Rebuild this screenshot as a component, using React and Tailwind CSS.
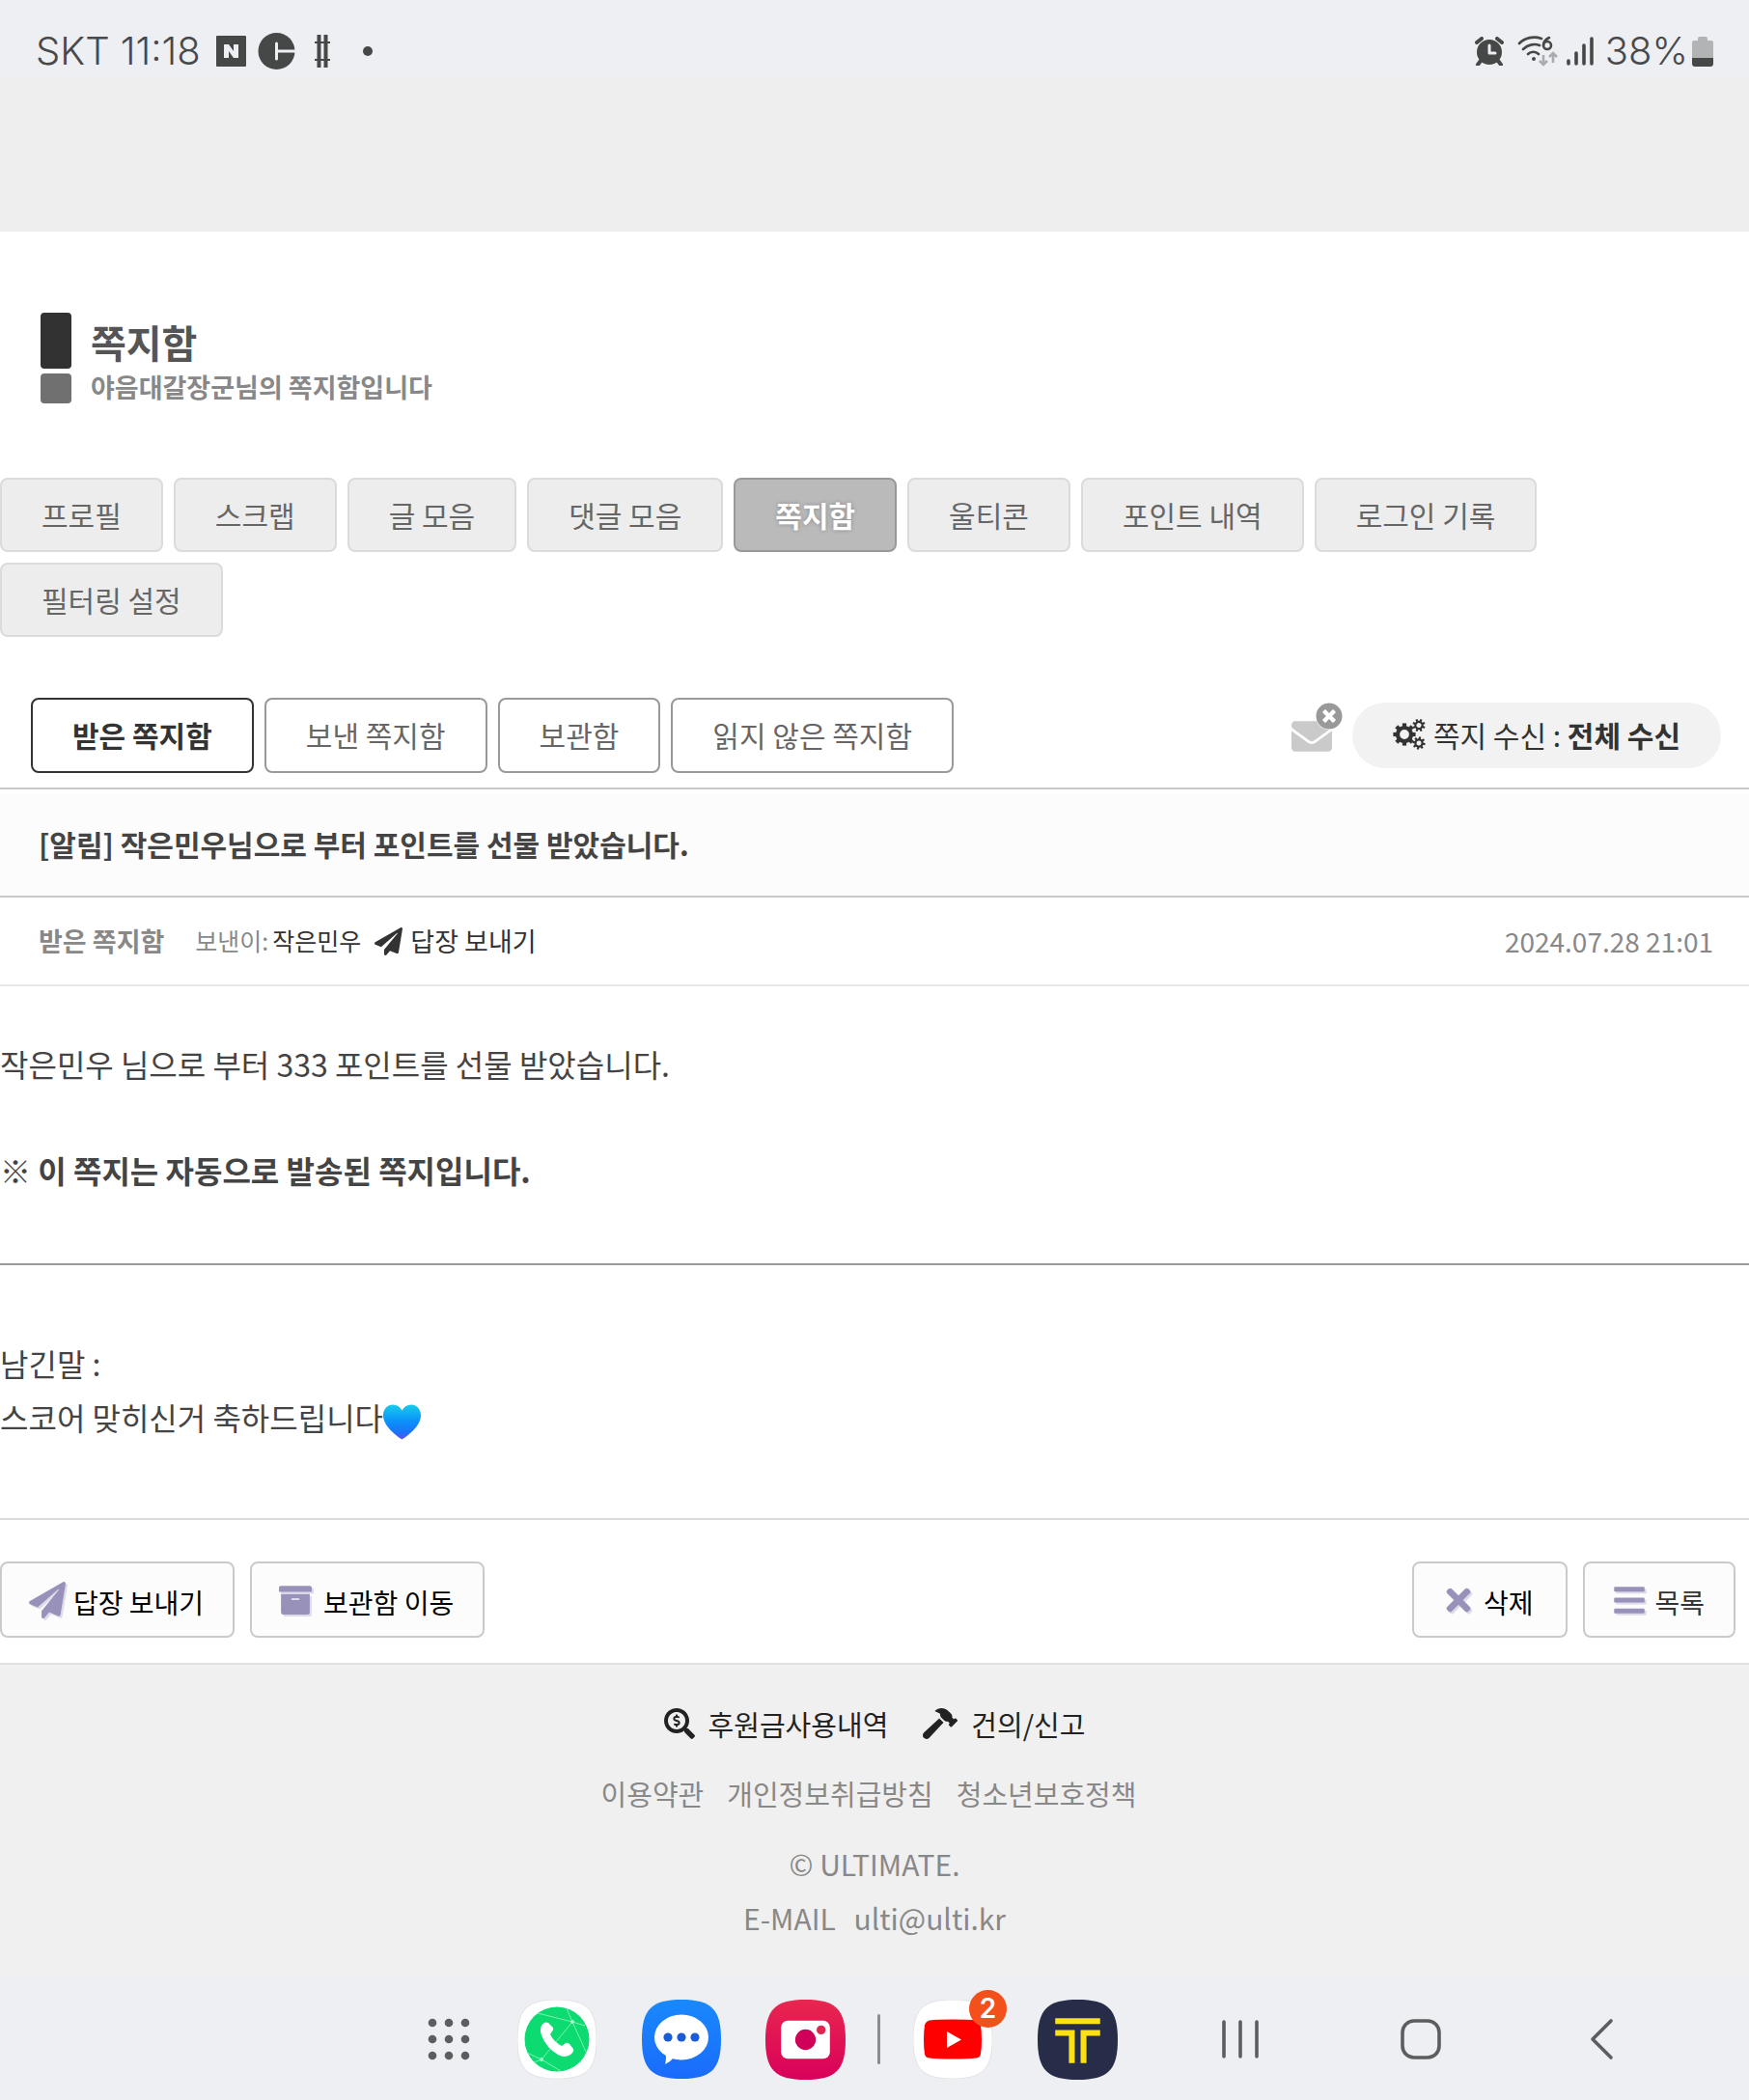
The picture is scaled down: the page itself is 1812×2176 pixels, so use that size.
import {
  FaArchive,
  FaBars,
  FaEnvelope,
  FaHammer,
  FaPaperPlane,
  FaSearchDollar,
  FaTimes,
  FaTimesCircle,
} from "react-icons/fa";

const profileTabs = [
  "프로필",
  "스크랩",
  "글 모음",
  "댓글 모음",
  "쪽지함",
  "울티콘",
  "포인트 내역",
  "로그인 기록",
  "필터링 설정",
];

const boxTabs = ["받은 쪽지함", "보낸 쪽지함", "보관함", "읽지 않은 쪽지함"];

const policies = ["이용약관", "개인정보취급방침", "청소년보호정책"];

// Rounded app tile, 82x82
const TILE = "M41 0C72 0 82 10 82 41S72 82 41 82 0 72 0 41 10 0 41 0Z";

const Gear = ({ cx, cy, r, width, tooth, turn = 0 }) => (
  <g transform={`rotate(${turn} ${cx} ${cy})`} stroke="currentColor" fill="none">
    <circle cx={cx} cy={cy} r={r} strokeWidth={width} />
    {[0, 45, 90, 135, 180, 225, 270, 315].map((deg) => (
      <path
        key={deg}
        d={`M${cx} ${cy - r}v${-tooth}`}
        strokeWidth={width}
        transform={`rotate(${deg} ${cx} ${cy})`}
      />
    ))}
  </g>
);

const Gears = () => (
  <svg className="mr-2" width="34" height="32" viewBox="0 0 34 32">
    <Gear cx={12} cy={16} r={7} width={4.2} tooth={4.6} />
    <Gear cx={27} cy={6.5} r={3.6} width={2.2} tooth={3} turn={22} />
    <Gear cx={27} cy={25} r={3.6} width={2.2} tooth={3} turn={10} />
  </svg>
);

const StatusBar = () => (
  <header className="h-20 bg-[#eeeff3] px-[37px] pt-[26px] flex justify-between items-start text-[#48494b] font-['Inter',sans-serif] font-light text-[40px] leading-[54px]">
    <div className="flex items-center">
      <span>SKT 11:18</span>
      <svg className="ml-4" width="31" height="32" viewBox="0 0 31 32">
        <rect width="31" height="32" rx="1" fill="#464847" />
        <path d="M8 23V9h5l5 7V9h5v14h-5l-5-7v7z" fill="#eeeff3" />
      </svg>
      <svg className="ml-3" width="39" height="38" viewBox="0 0 39 38">
        <circle cx="19.500" cy="19" r="19" fill="#464847" />
        <path
          d="M19.500 11v16M19.500 19H39"
          stroke="#eeeff3"
          strokeWidth="3"
          strokeLinecap="round"
        />
      </svg>
      <svg className="ml-5" width="16" height="34" viewBox="0 0 16 34">
        <path
          d="M4.500 0v34M11.500 0v34"
          stroke="#464847"
          strokeWidth="4"
        />
        <path d="M0 8h16M0 26h16" stroke="#464847" strokeWidth="2" />
      </svg>
      <span className="ml-[34px] size-[10px] rounded-full bg-[#464847]" />
    </div>

    <div className="flex items-center">
      <svg width="30" height="30" viewBox="0 0 30 30">
        <circle cx="15" cy="16" r="13" fill="#464847" />
        <path
          d="M2 6l5-4M28 6l-5-4M6 25l-3 4M24 25l3 4"
          stroke="#464847"
          strokeWidth="4"
          strokeLinecap="round"
        />
        <path
          d="M15 9v8h6"
          stroke="#eeeff3"
          strokeWidth="3"
          fill="none"
          strokeLinecap="round"
          strokeLinejoin="round"
        />
      </svg>
      <svg className="ml-[14px]" width="42" height="32" viewBox="0 0 42 32">
        <g
          stroke="#464847"
          strokeWidth="2.600"
          fill="none"
          strokeLinecap="round"
        >
          <path d="M2 8C8 2 17 0 25 3M6 14c5-5 12-6 17-4M11 19c3-3 8-3 11 0" />
          <path d="M33 2c-4 2-6 5-6 8" />
          <circle cx="31" cy="10" r="4" />
        </g>
        <circle cx="17" cy="24" r="2" fill="#464847" />
        <path
          d="M27 20v9m-4-3l4 4 4-4M37 28v-9m-4 3l4-4 4 4"
          stroke="#a9abae"
          strokeWidth="2.600"
          fill="none"
        />
      </svg>
      <svg className="ml-[9px]" width="28" height="30" viewBox="0 0 28 30">
        <path
          d="M2 25v3M10 17v11M18 9v19M26 2v26"
          stroke="#464847"
          strokeWidth="3.600"
          strokeLinecap="round"
        />
      </svg>
      <span className="ml-3">38%</span>
      <svg className="ml-1" width="22" height="31" viewBox="0 0 22 31">
        <path
          d="M6 2q0-2 2-2h6q2 0 2 2v2h4q2 0 2 2v16H0V6q0-2 2-2h4z"
          fill="#b1b3b5"
        />
        <path d="M0 22h22v6q0 3-3 3H3q-3 0-3-3z" fill="#464847" />
      </svg>
    </div>
  </header>
);

const BlueHeart = () => (
  <svg
    className="inline-block align-middle"
    width="39"
    height="37"
    viewBox="0 0 39 37"
    role="img"
    aria-label="파란 하트"
  >
    <defs>
      <linearGradient id="heart" x1="0" y1="0" x2="0" y2="1">
        <stop offset="0" stopColor="#17cdea" />
        <stop offset="0.450" stopColor="#0a94fb" />
        <stop offset="0.800" stopColor="#1a72fa" />
        <stop offset="1" stopColor="#5b55e8" />
      </linearGradient>
    </defs>
    <path
      d="M19.500 36.500C14 33 0 23 0 11.500 0 5 4.500.500 10 .500c4 0 7.500 2 9.500 6 2-4 5.500-6 9.500-6 5.500 0 10 4.500 10 11 0 11.500-14 21.500-19.500 25z"
      fill="url(#heart)"
    />
  </svg>
);

const ActionButton = ({ icon, label, className }) => (
  <button
    type="button"
    className={`h-[79px] flex items-center border-2 border-[#cacaca] rounded-lg bg-[#fcfcfc] text-[28px] ${className}`}
  >
    <span className="text-[#9891b9] drop-shadow-[2px_2px_0_#dedaea]">
      {icon}
    </span>
    <span className="pt-1">{label}</span>
  </button>
);

const Dock = () => (
  <nav
    aria-label="앱 바"
    className="h-32 bg-[#eeeff3] pt-[2px] pl-[443px] pr-[140px] flex items-center text-[#5c5d5f]"
  >
    <button type="button" aria-label="모든 앱">
      <svg width="44" height="44" viewBox="0 0 44 44" fill="#5c5d5f">
        {[5, 22, 39].map((y) =>
          [5, 22, 39].map((x) => (
            <circle key={`${x}-${y}`} cx={x} cy={y} r="4.300" />
          ))
        )}
      </svg>
    </button>
    <button type="button" aria-label="전화" className="ml-[49px]">
      <svg width="82" height="82" viewBox="0 0 82 82">
        <path d={TILE} fill="#fff" stroke="#e3e3e6" />
        <circle cx="41" cy="41" r="33.500" fill="#0bdb70" />
        <path
          d="M21 14l36 9-32 39M51 9l6 14 14 31M57 23l13 4M10 55l15 7 20 12M25 62l-8 3"
          stroke="#7df0b0"
          fill="none"
        />
        <circle cx="57" cy="23" r="2" fill="#a5f5c8" />
        <circle cx="25" cy="62" r="2" fill="#a5f5c8" />
        <path
          d="M25 27q3-5 7-3l5 5q1 2-1 4l-2 3q4 8 12 12l4-3q2-1 4 1l4 5q1 3-3 6-6 4-13 0-12-7-17-20-2-6 0-10z"
          fill="#fff"
        />
      </svg>
    </button>
    <button type="button" aria-label="메시지" className="ml-[47px]">
      <svg width="82" height="82" viewBox="0 0 82 82">
        <defs>
          <linearGradient id="msg" x1="0" y1="0" x2="0" y2="1">
            <stop offset="0" stopColor="#1989fb" />
            <stop offset="1" stopColor="#1a6bfb" />
          </linearGradient>
        </defs>
        <path d={TILE} fill="url(#msg)" />
        <ellipse cx="41" cy="39" rx="28" ry="23.500" fill="#fff" />
        <path d="M24 53q2 7 0 14 6-3 9-7z" fill="#fff" />
        <g fill="#1c5bd8">
          <circle cx="27" cy="39" r="4.600" />
          <circle cx="41" cy="39" r="4.600" />
          <circle cx="55" cy="39" r="4.600" />
        </g>
      </svg>
    </button>
    <button type="button" aria-label="카메라" className="ml-[46px]">
      <svg width="83" height="83" viewBox="0 0 82 82">
        <defs>
          <linearGradient id="cam" x1="0" y1="0" x2="0" y2="1">
            <stop offset="0" stopColor="#e8274f" />
            <stop offset="1" stopColor="#d9005b" />
          </linearGradient>
        </defs>
        <path d={TILE} fill="url(#cam)" />
        <rect x="16" y="21.500" width="50" height="39" rx="7" fill="#fff" />
        <circle cx="41" cy="41" r="10.500" fill="#cf0058" />
        <circle cx="57" cy="31" r="4.600" fill="#e32350" />
      </svg>
    </button>
    <span className="ml-[33px] w-[3px] h-[52px] rounded bg-[#8b8c8f]" />
    <button type="button" aria-label="YouTube" className="ml-[34px] relative">
      <svg width="82" height="82" viewBox="0 0 82 82">
        <path d={TILE} fill="#fff" stroke="#e3e3e6" />
        <path
          d="M41 20.500q17 0 24 1 4 1 5 5 1 6 1 15t-1 15q-1 4-5 4-7 1-24 1t-24-1q-4 0-5-4-1-6-1-15t1-15q1-4 5-5 7-1 24-1z"
          fill="#f00"
        />
        <path d="M35 33v17l15-8.500z" fill="#fff" />
      </svg>
      <span className="absolute -top-[10px] -right-[15px] size-[39px] rounded-full bg-[#f4501b] text-white font-['Inter',sans-serif] font-semibold text-[28px] leading-[39px] text-center">
        2
      </span>
    </button>
    <button type="button" aria-label="T" className="ml-[47px]">
      <svg width="83" height="83" viewBox="0 0 82 82">
        <path d={TILE} fill="#272c49" />
        <path
          d="M18 19h46v6H18zM18 31h20v34h-6V37H18zM44 31h20v6H50v28h-6z"
          fill="#fae014"
        />
      </svg>
    </button>
    <div className="ml-auto flex items-center">
      <button type="button" aria-label="최근 앱">
        <svg width="40" height="42" viewBox="0 0 40 42">
          <path
            d="M3 3v36M20 3v36M37 3v36"
            stroke="#5c5d5f"
            strokeWidth="3.600"
            strokeLinecap="round"
          />
        </svg>
      </button>
      <button type="button" aria-label="홈" className="ml-[145px]">
        <svg width="44" height="44" viewBox="0 0 44 44">
          <rect
            x="3"
            y="3"
            width="38"
            height="38"
            rx="12"
            stroke="#5c5d5f"
            strokeWidth="3.600"
            fill="none"
          />
        </svg>
      </button>
      <button type="button" aria-label="뒤로" className="ml-[152px]">
        <svg width="26" height="44" viewBox="0 0 26 44">
          <path
            d="M23 3L4 22l19 19"
            stroke="#5c5d5f"
            strokeWidth="3.600"
            strokeLinecap="round"
            strokeLinejoin="round"
            fill="none"
          />
        </svg>
      </button>
    </div>
  </nav>
);

const App = () => {
  return (
    <div className="bg-white font-['Noto_Sans_CJK_KR',sans-serif] text-[#444]">
      <StatusBar />
      <div className="h-40 bg-[#eeeeee]" />

      <main>
        {/* Page title */}
        <div className="pt-[84px] pl-[42px] flex gap-5">
          <div className="flex flex-col gap-[5px]">
            <span className="w-8 h-[58px] rounded bg-[#323232]" />
            <span className="w-8 h-[31px] rounded bg-[#707070]" />
          </div>
          <div>
            <h1 className="text-[40px] leading-[60px] font-bold text-[#555]">
              쪽지함
            </h1>
            <p className="text-[27px] leading-[34px] font-bold text-[#888]">
              야음대갈장군님의 쪽지함입니다
            </p>
          </div>
        </div>

        <nav className="mt-[77px] flex flex-wrap gap-[11px]">
          {profileTabs.map((tab) => (
            <a
              key={tab}
              href="#"
              className={`h-[77px] px-[41px] flex items-center border-2 rounded-lg text-[30px] ${
                tab === "쪽지함"
                  ? "bg-[#bababa] border-[#999] text-white font-bold [text-shadow:0_0_4px_#888]"
                  : "bg-[#ededed] border-[#dbdbdb] text-[#666]"
              }`}
            >
              {tab}
            </a>
          ))}
        </nav>

        {/* Message boxes */}
        <div className="mt-[63px] pl-8 pr-[29px] pb-[15px] flex items-center justify-between border-b-2 border-[#cacaca]">
          <nav className="flex gap-[11px]">
            {boxTabs.map((tab, i) => (
              <a
                key={tab}
                href="#"
                className={`h-[78px] px-[41px] pb-[2px] flex items-center border-2 rounded-lg text-[30px] ${
                  i === 0
                    ? "border-[#333] text-[#333] font-bold"
                    : "border-[#999] text-[#666]"
                }`}
              >
                {tab}
              </a>
            ))}
          </nav>
          <div className="flex items-center">
            <span className="relative mt-[2px]">
              <FaEnvelope size={42} className="text-[#cacaca]" />
              <FaTimesCircle
                size={28}
                className="absolute -top-[14px] -right-[11px] text-[#999] bg-white rounded-full"
              />
            </span>
            <button
              type="button"
              className="ml-[21px] h-[68px] pl-[42px] pr-[42px] pb-[2px] flex items-center rounded-full bg-[#f2f2f2] text-[30px] text-[#333]"
            >
              <Gears />
              <span>
                쪽지 수신 : <b>전체 수신</b>
              </span>
            </button>
          </div>
        </div>

        <article>
          <h2 className="h-28 px-10 pt-[2px] flex items-center bg-[#fcfcfc] shadow-[inset_0_5px_0_#fff] border-b-2 border-[#cacaca] text-[30px] font-bold">
            [알림] 작은민우님으로 부터 포인트를 선물 받았습니다.
          </h2>
          <div className="h-[92px] pl-10 pr-[37px] flex items-center border-b-2 border-[#e8e8e8] text-[27px] text-[#888]">
            <b>받은 쪽지함</b>
            <span className="ml-8 text-[25px]">보낸이:</span>
            <a href="#" className="ml-1 text-[25px] text-[#333]">
              작은민우
            </a>
            <a href="#" className="ml-[14px] flex items-center text-[#333]">
              <FaPaperPlane size={29} className="mr-2" />
              답장 보내기
            </a>
            <time className="ml-auto text-[28px]">2024.07.28 21:01</time>
          </div>

          <div className="pt-[52px] pb-[77px] text-[32px] leading-[56px]">
            <p>작은민우 님으로 부터 333 포인트를 선물 받았습니다.</p>
            <p className="mt-[54px] font-bold">
              ※ 이 쪽지는 자동으로 발송된 쪽지입니다.
            </p>
            <hr className="mt-[69px] mb-[73px] border-t-2 border-[#999]" />
            <p>남긴말 :</p>
            <p className="h-14">
              스코어 맞히신거 축하드립니다
              <BlueHeart />
            </p>
          </div>
        </article>

        <div className="pt-[43px] pb-[26px] pr-[14px] flex justify-between border-t-2 border-[#dbdbdb]">
          <div className="flex gap-4">
            <ActionButton
              className="pl-7 pr-[30px] text-black"
              icon={<FaPaperPlane size={38} className="mr-2" />}
              label="답장 보내기"
            />
            <ActionButton
              className="pl-7 pr-[30px] text-black"
              icon={<FaArchive size={34} className="mr-3" />}
              label="보관함 이동"
            />
          </div>
          <div className="flex gap-4">
            <ActionButton
              className="pl-7 pr-[34px] text-black"
              icon={<FaTimes size={36} className="mr-2" />}
              label="삭제"
            />
            <ActionButton
              className="pl-7 pr-[30px] text-[#333]"
              icon={<FaBars size={36} className="mr-2" />}
              label="목록"
            />
          </div>
        </div>
      </main>

      <footer className="pt-[33px] pb-[33px] border-t-2 border-[#e0e0e0] bg-[#f0f0f0] text-center text-[30px] leading-[56px] text-[#888]">
        <div className="flex justify-center gap-9 text-[29px] text-[#222]">
          <a href="#" className="flex items-center gap-[14px]">
            <FaSearchDollar size={32} />
            후원금사용내역
          </a>
          <a href="#" className="flex items-center gap-[14px]">
            <FaHammer size={36} />
            건의/신고
          </a>
        </div>
        <div className="mt-4 pr-3 flex justify-center gap-6 text-[29px]">
          {policies.map((name) => (
            <a key={name} href="#">
              {name}
            </a>
          ))}
        </div>
        <p className="mt-[17px]">© ULTIMATE.</p>
        <p>
          E-MAIL <a href="#" className="ml-3">ulti@ulti.kr</a>
        </p>
      </footer>

      <Dock />
    </div>
  );
};

export default App;
